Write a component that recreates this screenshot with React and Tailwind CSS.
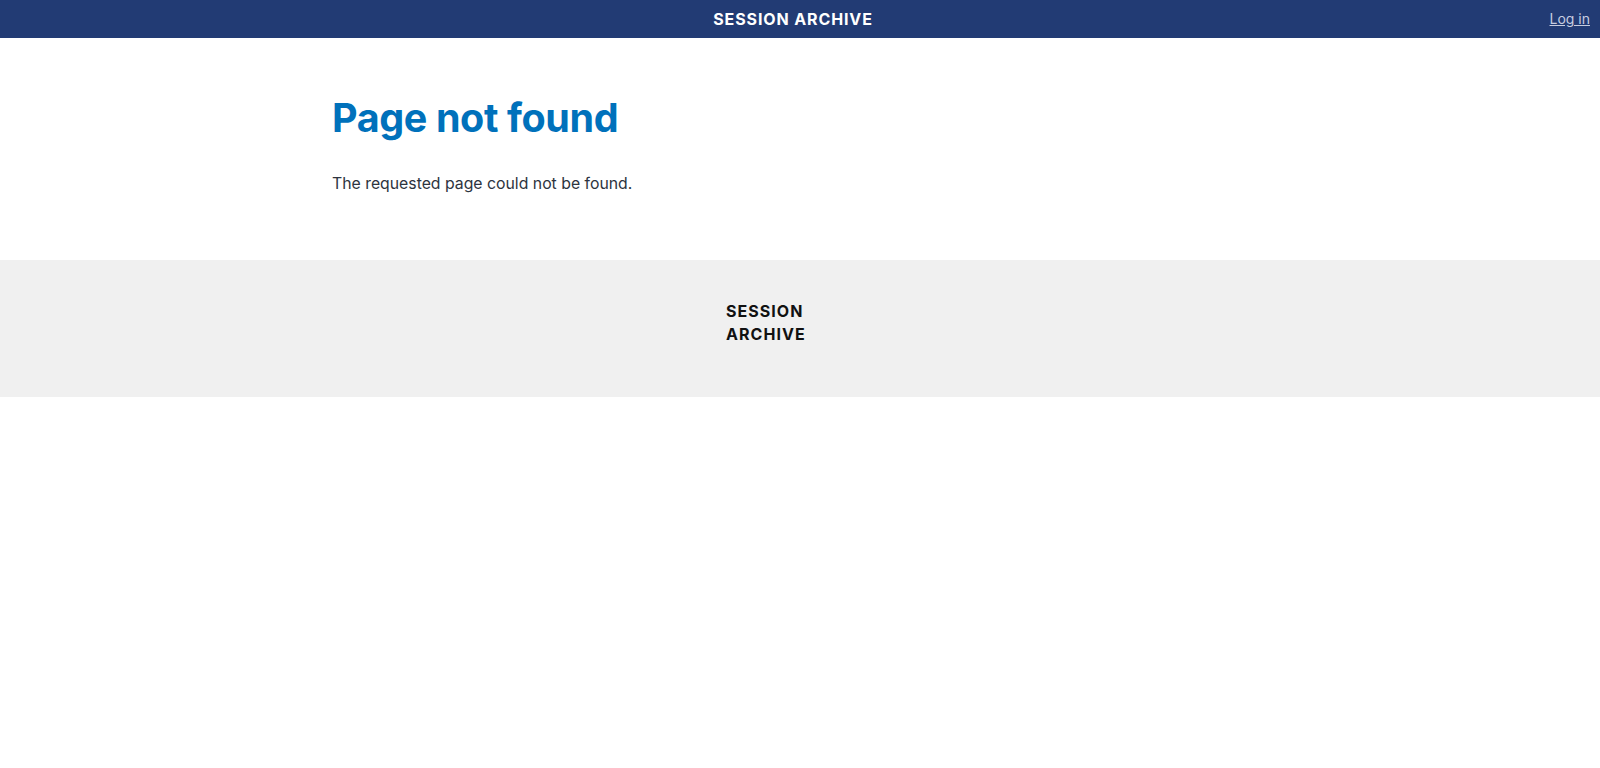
export default function App() {
  const font = { fontFamily: '"Inter", "Liberation Sans", sans-serif' };
  return (
    <div className="min-h-screen bg-white" style={font}>
      <header className="relative h-[38px] bg-[#223b74] flex items-center justify-center">
        <span className="mr-[14px] text-white font-bold text-[16px] tracking-[0.055em]">SESSION ARCHIVE</span>
        <a href="#" className="absolute right-[10px] top-[8px] text-[14px] text-[#c7cde0] underline">Log in</a>
      </header>
      <main className="mx-auto w-[936px] pt-[52px] pb-[64px]">
        <h1 className="text-[#0071bb] font-bold text-[39.5px] leading-[56px] tracking-[-0.01em]">Page not found</h1>
        <p className="mt-[26px] text-[15.8px] leading-[24px] text-[#2d3440]">The requested page could not be found.</p>
      </main>
      <footer className="bg-[#f0f0f0] h-[137px] flex justify-center pt-[40px]">
        <div className="w-[80px] ml-[-68px] text-[16px] font-bold tracking-[0.065em] leading-[23px] text-[#111]">SESSION ARCHIVE</div>
      </footer>
    </div>
  );
}
